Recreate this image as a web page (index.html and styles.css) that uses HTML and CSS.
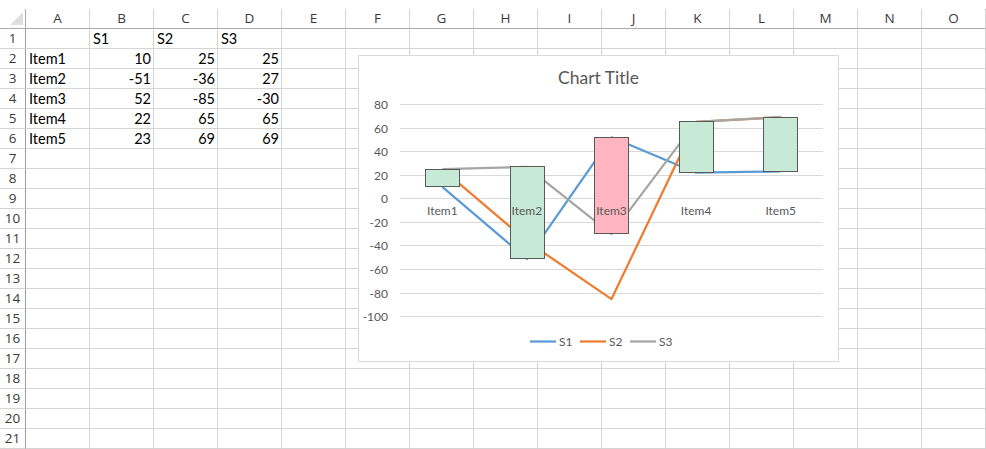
FILE: index.html
```html
<!DOCTYPE html>
<html>
<head>
<meta charset="utf-8">
<link rel="stylesheet" href="styles.css">
</head>
<body>
<div class="sheet">
  <div class="row head">
    <div class="corner"></div><div class="h">A</div><div class="h">B</div><div class="h">C</div><div class="h">D</div><div class="h">E</div><div class="h">F</div><div class="h">G</div><div class="h">H</div><div class="h">I</div><div class="h">J</div><div class="h">K</div><div class="h">L</div><div class="h">M</div><div class="h">N</div><div class="h">O</div>
  </div>
  <div class="row"><div class="n">1</div><div class="c"></div><div class="c">S1</div><div class="c">S2</div><div class="c">S3</div><div class="c"></div><div class="c"></div><div class="c"></div><div class="c"></div><div class="c"></div><div class="c"></div><div class="c"></div><div class="c"></div><div class="c"></div><div class="c"></div><div class="c"></div></div>
  <div class="row"><div class="n">2</div><div class="c">Item1</div><div class="c r">10</div><div class="c r">25</div><div class="c r">25</div><div class="c"></div><div class="c"></div><div class="c"></div><div class="c"></div><div class="c"></div><div class="c"></div><div class="c"></div><div class="c"></div><div class="c"></div><div class="c"></div><div class="c"></div></div>
  <div class="row"><div class="n">3</div><div class="c">Item2</div><div class="c r">-51</div><div class="c r">-36</div><div class="c r">27</div><div class="c"></div><div class="c"></div><div class="c"></div><div class="c"></div><div class="c"></div><div class="c"></div><div class="c"></div><div class="c"></div><div class="c"></div><div class="c"></div><div class="c"></div></div>
  <div class="row"><div class="n">4</div><div class="c">Item3</div><div class="c r">52</div><div class="c r">-85</div><div class="c r">-30</div><div class="c"></div><div class="c"></div><div class="c"></div><div class="c"></div><div class="c"></div><div class="c"></div><div class="c"></div><div class="c"></div><div class="c"></div><div class="c"></div><div class="c"></div></div>
  <div class="row"><div class="n">5</div><div class="c">Item4</div><div class="c r">22</div><div class="c r">65</div><div class="c r">65</div><div class="c"></div><div class="c"></div><div class="c"></div><div class="c"></div><div class="c"></div><div class="c"></div><div class="c"></div><div class="c"></div><div class="c"></div><div class="c"></div><div class="c"></div></div>
  <div class="row"><div class="n">6</div><div class="c">Item5</div><div class="c r">23</div><div class="c r">69</div><div class="c r">69</div><div class="c"></div><div class="c"></div><div class="c"></div><div class="c"></div><div class="c"></div><div class="c"></div><div class="c"></div><div class="c"></div><div class="c"></div><div class="c"></div><div class="c"></div></div>
  <div class="row"><div class="n">7</div><div class="c"></div><div class="c"></div><div class="c"></div><div class="c"></div><div class="c"></div><div class="c"></div><div class="c"></div><div class="c"></div><div class="c"></div><div class="c"></div><div class="c"></div><div class="c"></div><div class="c"></div><div class="c"></div><div class="c"></div></div>
  <div class="row"><div class="n">8</div><div class="c"></div><div class="c"></div><div class="c"></div><div class="c"></div><div class="c"></div><div class="c"></div><div class="c"></div><div class="c"></div><div class="c"></div><div class="c"></div><div class="c"></div><div class="c"></div><div class="c"></div><div class="c"></div><div class="c"></div></div>
  <div class="row"><div class="n">9</div><div class="c"></div><div class="c"></div><div class="c"></div><div class="c"></div><div class="c"></div><div class="c"></div><div class="c"></div><div class="c"></div><div class="c"></div><div class="c"></div><div class="c"></div><div class="c"></div><div class="c"></div><div class="c"></div><div class="c"></div></div>
  <div class="row"><div class="n">10</div><div class="c"></div><div class="c"></div><div class="c"></div><div class="c"></div><div class="c"></div><div class="c"></div><div class="c"></div><div class="c"></div><div class="c"></div><div class="c"></div><div class="c"></div><div class="c"></div><div class="c"></div><div class="c"></div><div class="c"></div></div>
  <div class="row"><div class="n">11</div><div class="c"></div><div class="c"></div><div class="c"></div><div class="c"></div><div class="c"></div><div class="c"></div><div class="c"></div><div class="c"></div><div class="c"></div><div class="c"></div><div class="c"></div><div class="c"></div><div class="c"></div><div class="c"></div><div class="c"></div></div>
  <div class="row"><div class="n">12</div><div class="c"></div><div class="c"></div><div class="c"></div><div class="c"></div><div class="c"></div><div class="c"></div><div class="c"></div><div class="c"></div><div class="c"></div><div class="c"></div><div class="c"></div><div class="c"></div><div class="c"></div><div class="c"></div><div class="c"></div></div>
  <div class="row"><div class="n">13</div><div class="c"></div><div class="c"></div><div class="c"></div><div class="c"></div><div class="c"></div><div class="c"></div><div class="c"></div><div class="c"></div><div class="c"></div><div class="c"></div><div class="c"></div><div class="c"></div><div class="c"></div><div class="c"></div><div class="c"></div></div>
  <div class="row"><div class="n">14</div><div class="c"></div><div class="c"></div><div class="c"></div><div class="c"></div><div class="c"></div><div class="c"></div><div class="c"></div><div class="c"></div><div class="c"></div><div class="c"></div><div class="c"></div><div class="c"></div><div class="c"></div><div class="c"></div><div class="c"></div></div>
  <div class="row"><div class="n">15</div><div class="c"></div><div class="c"></div><div class="c"></div><div class="c"></div><div class="c"></div><div class="c"></div><div class="c"></div><div class="c"></div><div class="c"></div><div class="c"></div><div class="c"></div><div class="c"></div><div class="c"></div><div class="c"></div><div class="c"></div></div>
  <div class="row"><div class="n">16</div><div class="c"></div><div class="c"></div><div class="c"></div><div class="c"></div><div class="c"></div><div class="c"></div><div class="c"></div><div class="c"></div><div class="c"></div><div class="c"></div><div class="c"></div><div class="c"></div><div class="c"></div><div class="c"></div><div class="c"></div></div>
  <div class="row"><div class="n">17</div><div class="c"></div><div class="c"></div><div class="c"></div><div class="c"></div><div class="c"></div><div class="c"></div><div class="c"></div><div class="c"></div><div class="c"></div><div class="c"></div><div class="c"></div><div class="c"></div><div class="c"></div><div class="c"></div><div class="c"></div></div>
  <div class="row"><div class="n">18</div><div class="c"></div><div class="c"></div><div class="c"></div><div class="c"></div><div class="c"></div><div class="c"></div><div class="c"></div><div class="c"></div><div class="c"></div><div class="c"></div><div class="c"></div><div class="c"></div><div class="c"></div><div class="c"></div><div class="c"></div></div>
  <div class="row"><div class="n">19</div><div class="c"></div><div class="c"></div><div class="c"></div><div class="c"></div><div class="c"></div><div class="c"></div><div class="c"></div><div class="c"></div><div class="c"></div><div class="c"></div><div class="c"></div><div class="c"></div><div class="c"></div><div class="c"></div><div class="c"></div></div>
  <div class="row"><div class="n">20</div><div class="c"></div><div class="c"></div><div class="c"></div><div class="c"></div><div class="c"></div><div class="c"></div><div class="c"></div><div class="c"></div><div class="c"></div><div class="c"></div><div class="c"></div><div class="c"></div><div class="c"></div><div class="c"></div><div class="c"></div></div>
  <div class="row"><div class="n">21</div><div class="c"></div><div class="c"></div><div class="c"></div><div class="c"></div><div class="c"></div><div class="c"></div><div class="c"></div><div class="c"></div><div class="c"></div><div class="c"></div><div class="c"></div><div class="c"></div><div class="c"></div><div class="c"></div><div class="c"></div></div>

  <div class="chart">
    <svg class="chart-svg" width="479" height="305" viewBox="0 0 479 305">
      <text class="title" x="239.5" y="28" text-anchor="middle">Chart Title</text>
      <g class="grid">
        <line x1="41" y1="48.5" x2="464" y2="48.5"/>
        <line x1="41" y1="72.5" x2="464" y2="72.5"/>
        <line x1="41" y1="95.5" x2="464" y2="95.5"/>
        <line x1="41" y1="119.5" x2="464" y2="119.5"/>
        <line x1="41" y1="142.5" x2="464" y2="142.5"/>
        <line x1="41" y1="166.5" x2="464" y2="166.5"/>
        <line x1="41" y1="189.5" x2="464" y2="189.5"/>
        <line x1="41" y1="213.5" x2="464" y2="213.5"/>
        <line x1="41" y1="237.5" x2="464" y2="237.5"/>
        <line x1="41" y1="260.5" x2="464" y2="260.5"/>
      </g>
      <g class="ylab" text-anchor="end">
        <text x="29" y="52.5">80</text>
        <text x="29" y="76.5">60</text>
        <text x="29" y="99.5">40</text>
        <text x="29" y="123.5">20</text>
        <text x="29" y="146.5">0</text>
        <text x="29" y="170.5">-20</text>
        <text x="29" y="193.5">-40</text>
        <text x="29" y="217.5">-60</text>
        <text x="29" y="241.5">-80</text>
        <text x="29" y="264.5">-100</text>
      </g>
      <polyline class="s1" points="83.3,130.9 167.9,203 252.5,81.3 337.1,116.7 421.7,115.5"/>
      <polyline class="s2" points="83.3,113.2 167.9,185.2 252.5,243.1 337.1,65.9 421.7,61.2"/>
      <polyline class="s3" points="83.3,113.2 167.9,110.8 252.5,178.1 337.1,65.9 421.7,61.2"/>
      <g class="bars">
        <rect class="up" x="66.5" y="113.5" width="34" height="17"/>
        <rect class="up" x="151.5" y="110.5" width="34" height="92"/>
        <rect class="down" x="235.5" y="81.5" width="34" height="96"/>
        <rect class="up" x="320.5" y="65.5" width="34" height="51"/>
        <rect class="up" x="404.5" y="61.5" width="34" height="54"/>
      </g>
      <g class="xlab" text-anchor="middle">
        <text x="83.3" y="158.5">Item1</text>
        <text x="167.9" y="158.5">Item2</text>
        <text x="252.5" y="158.5">Item3</text>
        <text x="337.1" y="158.5">Item4</text>
        <text x="421.7" y="158.5">Item5</text>
      </g>
      <g class="legend">
        <line class="s1" x1="171" y1="285.5" x2="197" y2="285.5"/>
        <text x="200" y="290">S1</text>
        <line class="s2" x1="221" y1="285.5" x2="247" y2="285.5"/>
        <text x="250" y="290">S2</text>
        <line class="s3" x1="271" y1="285.5" x2="297" y2="285.5"/>
        <text x="300" y="290">S3</text>
      </g>
    </svg>
  </div>
</div>
</body>
</html>
```

FILE: styles.css
```css
* { box-sizing: border-box; }
html, body { margin: 0; padding: 0; background: #fff; }
body { width: 986px; height: 449px; overflow: hidden; }
.sheet {
  position: relative;
  padding-top: 9px;
  font-family: Lato, "Liberation Sans", sans-serif;
  font-size: 14.5px;
  color: #000;
}
.row {
  display: grid;
  grid-template-columns: 26px repeat(15, 64px);
  height: 20px;
}
.row > div {
  height: 20px;
  border-bottom: 1px solid #d4d4d4;
  border-right: 1px solid #d4d4d4;
  white-space: nowrap;
  overflow: visible;
}
.c {
  padding: 0 2px 0 3px;
  line-height: 20px;
}
.c.r { text-align: right; }
.n {
  font-family: "Open Sans", "Noto Sans", sans-serif;
  font-size: 13.5px;
  color: #3a3a3a;
  text-align: center;
  line-height: 19px;
  border-right-color: #9f9f9f !important;
}
.head > div {
  border-bottom-color: #ababab;
}
.h {
  font-family: "Open Sans", "Noto Sans", sans-serif;
  font-size: 13.5px;
  color: #3a3a3a;
  text-align: center;
  line-height: 19px;
}
.corner {
  position: relative;
  border-right-color: #ababab !important;
}
.corner::after {
  content: "";
  position: absolute;
  left: 10px;
  top: 3px;
  width: 13px;
  height: 13px;
  background: #dfdfdf;
  clip-path: polygon(100% 0, 100% 100%, 0 100%);
}
.chart {
  position: absolute;
  left: 358px;
  top: 55px;
  width: 481px;
  height: 307px;
  background: #fff;
  border: 1px solid #d9d9d9;
}
.chart-svg {
  display: block;
  font-family: Lato, "Liberation Sans", sans-serif;
}
.title { font-size: 17.5px; fill: #595959; }
.grid line { stroke: #d9d9d9; stroke-width: 1; }
.ylab text { font-size: 12px; fill: #595959; }
.xlab text { font-size: 12px; fill: #595959; }
.legend text { font-size: 12px; fill: #595959; }
.s1, .s2, .s3 { fill: none; stroke-width: 2.25; stroke-linejoin: round; }
.s1 { stroke: #5b9bd5; }
.s2 { stroke: #ed7d31; }
.s3 { stroke: #a5a5a5; }
.bars rect { stroke: #595959; stroke-width: 1; }
.up { fill: #c7ead7; }
.down { fill: #ffb6c1; }
```
